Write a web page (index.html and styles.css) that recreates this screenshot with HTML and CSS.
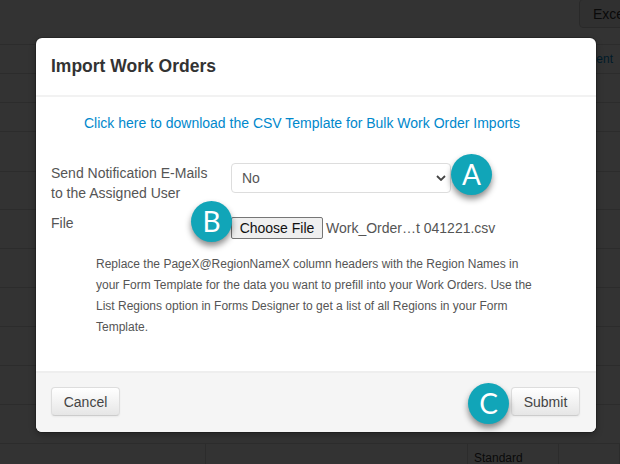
FILE: index.html
```html
<!DOCTYPE html>
<html lang="en">
<head>
<meta charset="utf-8">
<title>Import Work Orders</title>
<link rel="stylesheet" href="styles.css">
</head>
<body>
<div class="backdrop-page">
  <div class="top-bar"><button class="excel" type="button">Excel</button></div>
  <div class="bg-row h29"><span class="cell-link">Assignment</span></div>
  <div class="bg-row h29"></div>
  <div class="bg-row h29"></div>
  <div class="bg-row h40"></div>
  <div class="bg-row h38"></div>
  <div class="bg-row h39"></div>
  <div class="bg-row h39"></div>
  <div class="bg-row h39"></div>
  <div class="bg-row h39"></div>
  <div class="bg-row h39"></div>
  <div class="bg-row h39"></div>
  <div class="bg-grid">
    <div class="c1"></div><div class="c2"></div><div class="c3"><span>Standard</span></div><div class="c4"></div>
  </div>
</div>
<div class="shade"></div>
<div class="modal">
  <header class="modal-head"><h3>Import Work Orders</h3></header>
  <div class="modal-body">
    <p class="download"><a href="#">Click here to download the CSV Template for Bulk Work Order Imports</a></p>
    <div class="form-row first">
      <label class="lbl">Send Notification E-Mails to the Assigned User</label>
      <div class="select"><span>No</span>
        <svg class="chev" viewBox="0 0 10 6" width="10" height="6"><path d="M1 1l4 4 4-4" fill="none" stroke="#444" stroke-width="1.8"/></svg>
      </div>
    </div>
    <div class="form-row second">
      <label class="lbl">File</label>
      <div class="file"><span class="file-btn">Choose File</span><span class="file-name">Work_Order…t 041221.csv</span></div>
    </div>
    <p class="help">Replace the PageX@RegionNameX column headers with the Region Names in your Form Template for the data you want to prefill into your Work Orders. Use the List Regions option in Forms Designer to get a list of all Regions in your Form Template.</p>
  </div>
  <footer class="modal-foot">
    <button class="btn" type="button">Cancel</button>
    <button class="btn" type="button">Submit</button>
  </footer>
  <span class="marker a">A</span>
  <span class="marker b">B</span>
  <span class="marker c">C</span>
</div>
</body>
</html>
```
FILE: styles.css
```css
* { box-sizing: border-box; }
html, body { margin: 0; height: 100%; }
body { width: 620px; height: 464px; overflow: hidden; position: relative; background: #fff; font-family: "Liberation Sans", Arial, sans-serif; color: #333; }
.backdrop-page { height: 464px; overflow: hidden; }
.top-bar { height: 45px; border-bottom: 1px solid #ddd; display: flex; justify-content: flex-end; }
.excel { width: 60px; height: 29px; margin: -1px -19px 0 0; padding: 0 0 0 13px; text-align: left; border: 1px solid #ccc; border-radius: 4px; background: #f0f0f0; font: 14px "Liberation Sans", Arial, sans-serif; color: #333; }
.bg-row { border-bottom: 1px solid #ddd; display: flex; justify-content: flex-end; }
.h29 { height: 29px; }
.h38 { height: 38px; }
.h39 { height: 39px; }
.h40 { height: 40px; }
.cell-link { font-size: 12px; color: #08c; line-height: 29px; margin-right: 7px; }
.bg-grid { display: grid; grid-template-columns: 206px 262px 91px 61px; height: 30px; }
.bg-grid > div { border-right: 1px solid #ddd; }
.c3 { font-size: 12px; padding: 7px 0 0 6px; }
.shade { position: absolute; inset: 0; background: rgba(0, 0, 0, 0.8); }
.modal { position: absolute; left: 36px; top: 38px; width: 560px; height: 394px; background: #fff; border-radius: 6px; box-shadow: 0 0 0 1px rgba(0, 0, 0, 0.2), 0 3px 7px rgba(0, 0, 0, 0.3); display: flex; flex-direction: column; }
.modal-head { height: 59px; padding: 0 15px; border-bottom: 2px solid #f2f2f2; display: flex; align-items: center; }
.modal-head h3 { margin: 0; font-size: 17.5px; font-weight: bold; color: #333; }
.modal-body { flex: 1; padding: 0 15px; }
.download { margin: 16px 28px 0 0; text-align: center; font-size: 14px; line-height: 20px; }
.download a { color: #0088cc; text-decoration: none; }
.form-row { display: flex; font-size: 14px; color: #555; }
.first { margin-top: 29px; }
.second { margin-top: 9px; }
.lbl { width: 180px; padding: 1px 15px 0 0; line-height: 20px; }
.select { width: 220px; height: 30px; margin-top: 1px; padding: 0 4px 0 10px; background: #fff; border: 1px solid #ddd; border-radius: 4px; display: flex; align-items: center; justify-content: space-between; font-size: 14px; color: #555; }
.chev { display: block; }
.file { display: flex; align-items: center; height: 22px; color: #555; margin-top: 5px; }
.file-btn { height: 22px; width: 92px; background: #efefef; border: 1px solid #767676; border-radius: 2px; color: #111; font-size: 14px; line-height: 20px; text-align: center; }
.file-name { margin-left: 3px; font-size: 14px; }
.help { margin: 15px 45px 0 45px; font-size: 12px; line-height: 21px; color: #555; }
.modal-foot { height: 61px; padding: 14px 16px 0 15px; background: #f5f5f5; border-top: 2px solid #eee; border-radius: 0 0 6px 6px; display: flex; justify-content: space-between; align-items: flex-start; }
.btn { width: 69px; height: 29px; padding: 0; font: 14px "Liberation Sans", Arial, sans-serif; color: #444; border: 1px solid #ddd; border-bottom-color: #ccc; border-radius: 4px; background: linear-gradient(#fff, #e6e6e6); box-shadow: 0 1px 2px rgba(0,0,0,.05); }
.marker { position: absolute; width: 41px; height: 41px; border-radius: 50%; background: #11a5b8; color: #fff; font-size: 28px; line-height: 41px; text-align: center; box-shadow: 0 4px 6px rgba(0, 0, 0, 0.45); font-family: Lato, "Open Sans", "Liberation Sans", sans-serif; }
.a { left: 415px; top: 116px; }
.b { left: 155px; top: 163px; }
.c { left: 432px; top: 345px; }
```
